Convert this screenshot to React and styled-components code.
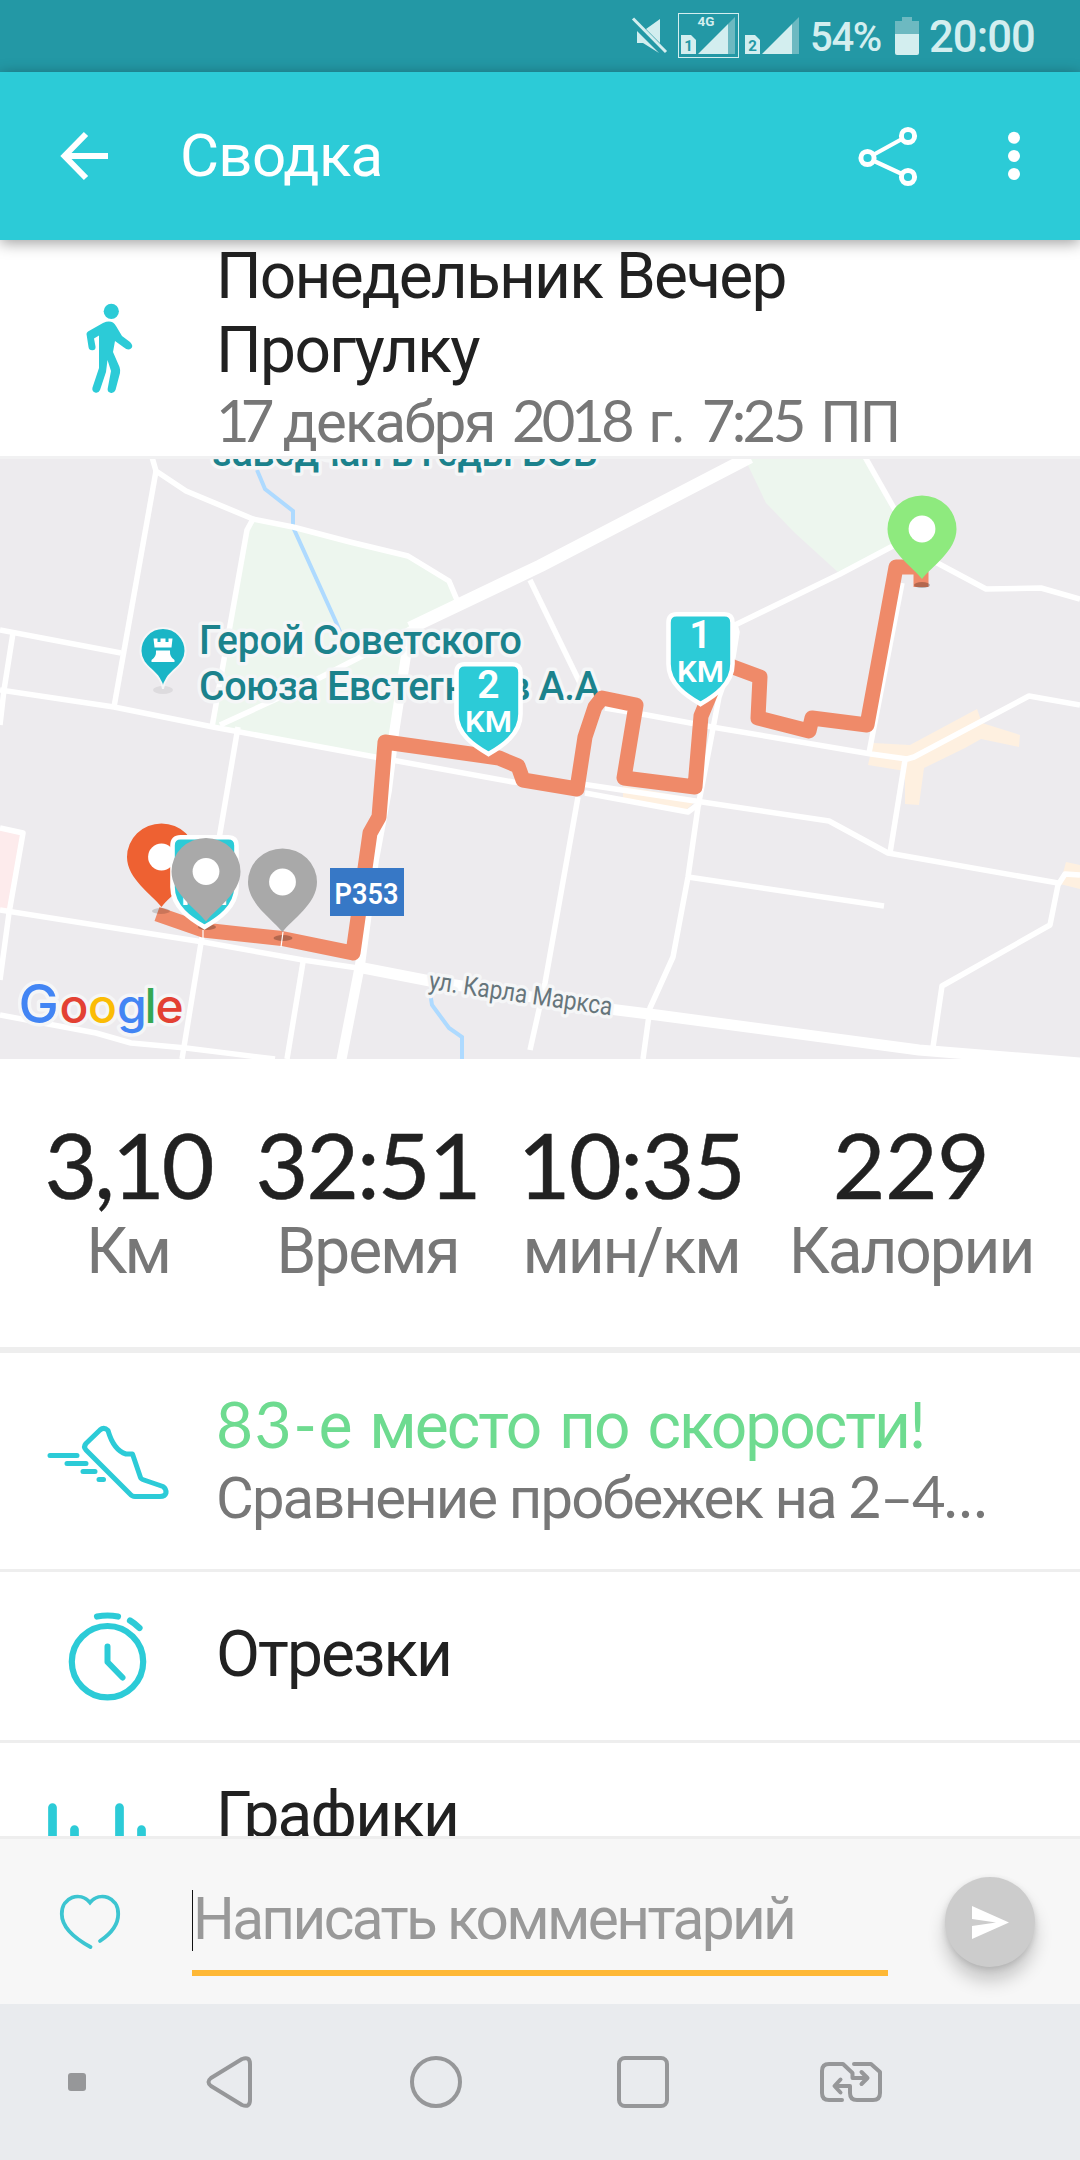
import React from 'react';
import styled, { createGlobalStyle } from 'styled-components';

const GlobalStyle = createGlobalStyle`
  * { box-sizing: border-box; }
  body {
    margin: 0;
    background: #fff;
    font-family: Roboto, "Liberation Sans", sans-serif;
  }
  svg { display: block; flex: none; overflow: visible; }
`;

const teal = '#2ccbd7';

const Screen = styled.div`
  width: 1080px;
  height: 2160px;
  display: flex;
  flex-direction: column;
  overflow: hidden;
  background: #fff;
`;

/* status bar */
const StatusBar = styled.div`
  flex: none;
  height: 72px;
  padding: 0 45px 0 632px;
  display: flex;
  background: #2398a5;
  color: #d3eeef;
`;

const StatusText = styled.span`
  width: ${p => p.$width}px;
  margin-left: ${p => p.$left}px;
  font-size: ${p => p.$size}px;
  font-weight: 500;
  letter-spacing: ${p => p.$spacing || 0}px;
  line-height: 75px;
  white-space: nowrap;
`;

/* app bar */
const AppBar = styled.header`
  position: relative;
  z-index: 2;
  flex: none;
  height: 168px;
  padding: 0 60px;
  display: flex;
  align-items: center;
  background: ${teal};
  box-shadow: 0 3px 14px rgba(0, 0, 0, 0.38);
`;

const AppTitle = styled.h1`
  flex: 1;
  margin: 0 0 0 72px;
  color: #fff;
  font-size: 60px;
  font-weight: 400;
  line-height: 168px;
  letter-spacing: -0.7px;
`;

const Content = styled.main`
  flex: none;
  height: 1596px;
  display: flex;
  flex-direction: column;
  overflow: hidden;
`;

/* rows */
const Row = styled.section`
  flex: none;
  height: ${p => p.$height}px;
  padding-top: ${p => p.$top}px;
  display: flex;
  align-items: flex-start;
  border-bottom: ${p => (p.$border || 0)}px solid #eee;
`;

const IconCell = styled.div`
  flex: none;
  width: 216px;
  padding-top: ${p => p.$top || 0}px;
  display: flex;
  justify-content: center;
`;

const RowText = styled.div`
  flex: 1;
  padding-top: ${p => p.$top || 0}px;
`;

const Title = styled.div`
  font-size: 64px;
  line-height: 74px;
  letter-spacing: ${p => p.$spacing || -1.8}px;
  word-spacing: ${p => p.$words || 0}px;
  color: ${p => p.$color || '#212121'};
  white-space: nowrap;
`;

const SubTitle = styled.div`
  font-size: 58px;
  line-height: 68px;
  letter-spacing: -1.85px;
  word-spacing: ${p => p.$words || 0}px;
  color: #777;
  white-space: nowrap;
`;

const Num = styled.span`
  font-family: Lato, Roboto, sans-serif;
  line-height: 0;
  letter-spacing: ${p => (p.$spacing === undefined ? 'inherit' : `${p.$spacing}px`)};
`;

const MapBox = styled.div`
  flex: none;
  height: 603px;
  border-top: 3px solid #f1f1f2;
  background: #edebee;
  overflow: hidden;
`;

/* stats */
const Stats = styled.section`
  flex: none;
  height: 294px;
  padding-top: 55px;
  display: grid;
  grid-template-columns: 256px 223px 304px 256px;
  border-bottom: 6px solid #eee;
`;

const Stat = styled.div`
  display: flex;
  flex-direction: column;
  align-items: center;
  white-space: nowrap;
`;

const StatValue = styled.div`
  font-family: Lato, Roboto, sans-serif;
  font-size: 91px;
  line-height: 100px;
  letter-spacing: ${p => p.$spacing || 0}px;
  color: #212121;
  -webkit-text-stroke: 0.5px #212121;
`;

const StatLabel = styled.div`
  font-size: 64px;
  line-height: 76px;
  letter-spacing: -2.1px;
  color: #777;
`;

/* comment bar */
const CommentBar = styled.footer`
  flex: none;
  height: 168px;
  display: flex;
  align-items: flex-start;
  border-top: 3px solid #eee;
  background: #f7f7f7;
`;

const HeartCell = styled.div`
  width: 192px;
  padding: 54px 0 0 58px;
`;

const Field = styled.div`
  width: 696px;
  height: 137px;
  padding-top: 51px;
  display: flex;
  border-bottom: 6px solid #feb836;
`;

const Caret = styled.span`
  width: 1px;
  height: 61px;
  background: #111;
`;

const Placeholder = styled.span`
  font-size: 58.5px;
  line-height: 59px;
  color: #999;
  letter-spacing: -2.6px;
  white-space: nowrap;
`;

const SendButton = styled.div`
  width: 90px;
  height: 90px;
  margin: 38px 0 0 57px;
  display: flex;
  align-items: center;
  justify-content: center;
  border-radius: 50%;
  background: #ccc;
  box-shadow: 0 14px 18px rgba(0, 0, 0, 0.2), 0 2px 6px rgba(0, 0, 0, 0.12);
`;

/* android nav */
const NavBar = styled.nav`
  flex: none;
  height: 156px;
  display: grid;
  grid-template-columns: 154px 150px 264px 150px 266px;
  justify-items: center;
  align-items: center;
  background: #e9ebee;
`;

const MuteIcon = () => (
  <svg width="36" height="72" viewBox="0 0 36 72">
    <path d="M28 19V43L14 29ZM5 31L27 53L11 43H5Z" fill="currentColor" />
    <path d="M1 18.5L34 52" stroke="currentColor" strokeWidth="3" />
  </svg>
);

const SignalCell = styled.svg`
  margin-left: ${p => p.$left}px;
`;

const SignalIcon = ({ sim, boxed }) => (
  <SignalCell $left={boxed ? 10 : 2} width="62" height="72" viewBox="0 0 62 72">
    {boxed && <rect x=".5" y="13.5" width="60" height="44" fill="none" stroke="currentColor" />}
    {boxed && <text x="28" y="26" textAnchor="middle" fontSize="13.5" fontWeight="700" fill="currentColor">4G</text>}
    <path d="M3 35H13L18 40V54H3Z" fill="currentColor" />
    <text x="10.5" y="51" textAnchor="middle" fontSize="15" fontWeight="700" fill="#2398a5">{sim}</text>
    <path d="M20 54L50 24V54Z" fill="currentColor" />
    <path d="M50 24L57 17V54H50Z" fill="#6db9c1" />
  </SignalCell>
);

const BatteryIcon = () => (
  <svg width="24" height="72" viewBox="0 0 24 72">
    <path d="M7 17H17V21H24V34H0V21H7Z" fill="#6db9c1" />
    <path d="M0 34H24V53Q24 55 22 55H2Q0 55 0 53Z" fill="currentColor" />
  </svg>
);

const BackIcon = () => (
  <svg width="48" height="48" viewBox="0 0 48 48" fill="none" stroke="#fff" strokeWidth="6">
    <path d="M48 24H5M26 2L4.5 24L26 46" />
  </svg>
);

const ShareIcon = () => (
  <svg width="60" height="62" viewBox="0 0 60 62" fill="none" stroke="#fff" strokeWidth="5">
    <circle cx="50" cy="11" r="6.6" />
    <circle cx="9.5" cy="33" r="6.6" />
    <circle cx="50" cy="52" r="6.6" />
    <path d="M15 30L44 14M16 36L44 49" strokeWidth="4.2" />
  </svg>
);

const DotsMark = styled.svg`
  margin-left: 90px;
`;

const WalkIcon = () => (
  <svg width="48" height="92" viewBox="84 302 48 92" fill={teal}>
    <ellipse cx="111.3" cy="311.3" rx="7.6" ry="7.6" />
    <path d="M103 323Q112 319 116 326L122 336L130 342Q134 346 131 348.5Q128 351 124 347.5L115 341L113 352L119.5 367Q120.5 370 120 373L115.5 390Q114 393.5 111 393Q107 392 107.7 388.5L111 371L107.5 360L106 372L100 390Q98.5 393.5 95 392.5Q91.5 391 92.5 387.5L99 368V335.5L94 338.5L95.5 346.5Q96 350 92.5 350.3Q89 350.5 88.5 347L86.5 334Q86.5 332.5 88 331.5Z" />
  </svg>
);

const ShoeIcon = () => (
  <svg width="120" height="76" viewBox="0 0 120 76" fill="none" stroke={teal} strokeWidth="5" strokeLinecap="round" strokeLinejoin="round">
    <path d="M52 5Q56 1.5 60 5.5C63 16 68 26 78 29H84.5L92.5 52.5Q93 54 96 55L115 61.5Q118.5 64 118 68Q117 71.5 112 71.5H87Q84 71.5 82 69L38 25Q35 22 38 18.5Z" />
    <path d="M2 30.5H29M19 38.5H38M35 46.5H47M51 54.5H55.5" />
  </svg>
);

const ClockIcon = () => (
  <svg width="80" height="92" viewBox="0 0 80 92" fill="none" stroke={teal} strokeLinecap="round" strokeLinejoin="round">
    <circle cx="39.5" cy="51.7" r="35.7" strokeWidth="6.2" />
    <path d="M39.5 36.5V52L54.5 67.5" strokeWidth="6" />
    <path d="M29 6.5Q39.5 4.5 50 6.5M62 10.5Q67 13.5 71.5 18" strokeWidth="6.2" />
  </svg>
);

const ChartIcon = () => (
  <svg width="120" height="90" viewBox="0 0 120 90" stroke={teal} strokeWidth="8.7" strokeLinecap="round">
    <path d="M4.5 4.5V80M26.5 26.5V80M71.5 4.5V80M93.5 26.5V80" />
  </svg>
);

const HeartIcon = () => (
  <svg width="64" height="58" viewBox="58 1893 64 58" fill="none" stroke="#3cc5d1" strokeWidth="3.8" strokeLinecap="round">
    <path d="M90.5 1947C74 1938 61.8 1927 61.8 1914C61.8 1897 80 1891 90 1902.5C100 1891 118.2 1897 118.2 1914C118.2 1926 109 1935 100 1941" />
  </svg>
);

const SendIcon = () => (
  <svg width="37" height="33" viewBox="0 0 37 33">
    <path d="M0 0L37 16.5L0 33V20L24 16.5L0 13Z" fill="#fff" />
  </svg>
);

const parks = [
  'M253 519L293 527L408 556L449 581L457 600L410 630L394 733L385 758L213 727L247 530Z',
  'M744 457L766 503L795 533L840 574L893 547V513L865 457Z',
];

const blocks = [
  'M873 743L910 745L977 709L982 723L1020 735L1019 747L981 739L965 748L924 768L919 805L905 804V771L868 765Z',
  'M623 786L698 799L686 810L623 798Z',
  'M1066 862L1080 865V889L1060 884Z',
];

const streets = [
  'M152 457L156 471L186 491L253 519L293 527L350 542L408 556L449 581L457 600',
  'M156 471L114 707',
  'M253 519L247 530L212 727',
  'M0 630L121 653',
  'M13 633L4 690L0 725',
  'M0 690L114 707L213 727L375 757L513 782L585 784.5L702 802L829 821L888 853L1058 883',
  'M585 793L688 812L700 803',
  'M220 725L296 690L368 653L412 628',
  'M238 727L220 833L201 943L182 1059',
  'M530 580L581 685',
  'M865 457L895 510',
  'M915 535L891 547L840 574L735 625L737 632L733 657L719 697L698 807L688 877L673 957L650 1008L643 1059',
  'M930 559L941 565L986 589L1041 588L1080 599',
  'M902 583L874 727L869 753',
  'M605 708L647 715L712 727L871 754L907 759L914 757L1029 696L1080 705',
  'M905 760L890 853',
  'M688 877L884 906',
  'M1080 875L1065 874L1058 885L1050 925L942 986L933 1047',
  'M0 910L203 942L303 960L358 968',
  'M303 962L287 1059',
  'M0 1015L96 1033L131 1043L186 1048L275 1059',
  'M0 828L23 833L9 913L0 980',
  'M578 797L545 983L530 1050',
];

const route = 'M921 587V567H896L867 725L812 718L809 731L758 718L760 677L733 667L718 661L711 692L701 716L695 787L624 778L636 705L602 698L595 707L585 737L577 789L523 780L518 766L499 758L385 742L379 817L370 833L353 953L282 938.5L203 930L157 914';

const Pin = ({ x, y, color }) => (
  <g transform={`translate(${x} ${y})`}>
    <path d="M0 50C-9 38 -34.5 22 -34.5 0A34.5 33.5 0 0 1 34.5 0C34.5 22 9 38 0 50Z" fill={color} />
    <circle r="13.4" fill="#fff" />
  </g>
);

const KmMarker = ({ x, y, n }) => (
  <g transform={`translate(${x} ${y})`}>
    <path d="M-24 2.3H24Q32 2.3 32 10.5V52C32 72 14 84 0 92C-14 84 -32 72 -32 52V10.5Q-32 2.3 -24 2.3Z" fill={teal} stroke="#fff" strokeWidth="4.6" />
    <text y="36" textAnchor="middle" fontSize="39" fontWeight="600" fill="#fff">{n}</text>
    <text x="-23.5" y="70" textLength="47" lengthAdjust="spacingAndGlyphs" fontSize="29.5" fontWeight="600" fill="#fff">KM</text>
  </g>
);

const Halo = styled.text`
  font-family: Roboto, sans-serif;
  paint-order: stroke;
  stroke: #f5f6f7;
  stroke-width: 7px;
  stroke-linejoin: round;
`;

const MapLogo = styled(Halo)`
  font-family: Inter, Roboto, sans-serif;
  font-weight: 500;
  font-size: 48px;
`;

const RouteMap = () => (
  <svg width="1080" height="600" viewBox="0 459 1080 600">
    {parks.map(d => <path key={d} d={d} fill="#edf6ee" />)}
    {blocks.map(d => <path key={d} d={d} fill="#fef0e0" />)}
    <path d="M0 828L22 832L9 911L0 909Z" fill="#fdebec" />

    {/* streams */}
    <g fill="none" stroke="#aedaff" strokeWidth="4">
      <path d="M257 470L265 489L293 511V527L336 622L341 634" />
      <path d="M430 992L432 1005L449 1028L462 1037V1059" />
    </g>

    {/* streets */}
    <g fill="none" stroke="#fff" strokeWidth="5.5" strokeLinejoin="round">
      {streets.map(d => <path key={d} d={d} />)}
      <path d="M410 628L540 566L750 457" strokeWidth="13" />
      <path d="M410 630L394 733L387 790L374 860L360 965L341 1062" strokeWidth="10" />
      <path d="M358 967L430 981L609 1009L657 1015L919 1050L1080 1063" strokeWidth="11" />
    </g>

    <Halo x="212" y="466" textLength="386" fontSize="40" fontWeight="500" fill="#1b828c">заводчан в годы ВОВ</Halo>
    <Halo x="199" y="654" textLength="323" fontSize="40" fontWeight="500" fill="#1b828c">Герой Советского</Halo>
    <Halo x="199" y="700" textLength="402" fontSize="40" fontWeight="500" fill="#1b828c">Союза Евстегнеев А.А</Halo>
    <Halo transform="translate(428 989) rotate(8.2)" textLength="185" lengthAdjust="spacingAndGlyphs" fontSize="26" fill="#66757b">ул. Карла Маркса</Halo>

    {/* monument */}
    <ellipse cx="163" cy="690" rx="10" ry="4" fill="#dddbde" />
    <path d="M163 689C161 671 140.5 668 140.5 651A22.5 23 0 0 1 185.5 651C185.5 668 165 671 163 689Z" fill="#1ab5c6" stroke="#f5f6f7" strokeWidth="2" />
    <path d="M153.5 638.5H157.5V642H160.5V638.5H165.5V642H168.5V638.5H172.5L171.5 647.5H154.5ZM156 650.5H170Q169.5 657 174.5 660V662H151.5V660Q156.5 657 156 650.5Z" fill="#fff" />

    <path d={route} fill="none" stroke="#ef8a69" strokeWidth="15" strokeLinejoin="round" />
    <g fill="#000" fillOpacity=".25">
      <ellipse cx="922" cy="585" rx="8" ry="3" />
      <ellipse cx="207" cy="927" rx="9" ry="3" />
      <ellipse cx="283" cy="938" rx="9.5" ry="3" />
    </g>
    <ellipse cx="161" cy="911" rx="9" ry="3" fillOpacity=".15" />
    <path d="M203 930V939M283 932L281 947" stroke="#fff" strokeWidth="1.2" />

    <rect x="330" y="868" width="74" height="48" fill="#3778c6" />
    <text x="334.5" y="904" textLength="64" lengthAdjust="spacingAndGlyphs" fontSize="29" fontWeight="600" fill="#fff">Р353</text>

    <Pin x="922" y="529" color="#8eea7e" />
    <KmMarker x="700.5" y="612" n="1" />
    <KmMarker x="488.5" y="662" n="2" />
    <Pin x="161.5" y="857" color="#ee6132" />
    <KmMarker x="204.5" y="835" n="3" />
    <Pin x="206" y="871.5" color="#a9a9a9" />
    <Pin x="282.5" y="882" color="#a9a9a9" />

    <MapLogo y="1023">
      <tspan x="18.5" fontSize="54" fill="#4285f4">G</tspan>
      <tspan x="59.5" fill="#e34133">o</tspan>
      <tspan x="88" fill="#fbbc05">o</tspan>
      <tspan x="117" fill="#4285f4">g</tspan>
      <tspan x="144.5" fill="#34a853">l</tspan>
      <tspan x="155.5" fill="#e34133">e</tspan>
    </MapLogo>
  </svg>
);

const stats = [
  { value: '3,10', label: 'Км', spacing: -3 },
  { value: '32:51', label: 'Время', spacing: -2 },
  { value: '10:35', label: 'мин/км', spacing: -1.5 },
  { value: '229', label: 'Калории', spacing: -0.6 },
];

const App = () => {
  return (
    <Screen>
      <GlobalStyle />
      <StatusBar>
        <MuteIcon />
        <SignalIcon sim="1" boxed />
        <SignalIcon sim="2" />
        <StatusText $left={6} $width={85} $size={40} $spacing={-1.3}>54%</StatusText>
        <BatteryIcon />
        <StatusText $left={10} $width={106} $size={43.5} $spacing={-0.9}>20:00</StatusText>
      </StatusBar>

      <AppBar>
        <BackIcon />
        <AppTitle>Сводка</AppTitle>
        <ShareIcon />
        <DotsMark width="12" height="50" viewBox="0 0 12 50" fill="#fff">
          <circle cx="6" cy="6.7" r="6" />
          <circle cx="6" cy="25" r="6" />
          <circle cx="6" cy="43" r="6" />
        </DotsMark>
      </AppBar>

      <Content>
        <Row $height={216} $top={0}>
          <IconCell $top={62}><WalkIcon /></IconCell>
          <RowText>
            <Title>Понедельник Вечер</Title>
            <Title $spacing={-1.6}>Прогулку</Title>
            <SubTitle $words={5}>
              <Num $spacing={-9}>17</Num> декабря <Num $spacing={-4}>2018</Num> г. <Num $spacing={-3.6}>7:25</Num> ПП
            </SubTitle>
          </RowText>
        </Row>

        <MapBox><RouteMap /></MapBox>

        <Stats>
          {stats.map(s => (
            <Stat key={s.label}>
              <StatValue $spacing={s.spacing}>{s.value}</StatValue>
              <StatLabel>{s.label}</StatLabel>
            </Stat>
          ))}
        </Stats>

        <Row $height={219} $top={36} $border={3}>
          <IconCell $top={36}><ShoeIcon /></IconCell>
          <RowText $top={1}>
            <Title $color="#6edb90" $spacing={-2} $words={5}><Num $spacing={1.5}>83-</Num>е место по скорости<Num>!</Num></Title>
            <SubTitle>Сравнение пробежек на <Num>2–4…</Num></SubTitle>
          </RowText>
        </Row>
        <Row $height={171} $top={38} $border={3}>
          <IconCell><ClockIcon /></IconCell>
          <RowText $top={8}><Title $spacing={-1.95}>Отрезки</Title></RowText>
        </Row>
        <Row $height={148} $top={36}>
          <IconCell $top={24}><ChartIcon /></IconCell>
          <RowText><Title>Графики</Title></RowText>
        </Row>
      </Content>

      <CommentBar>
        <HeartCell><HeartIcon /></HeartCell>
        <Field>
          <Caret />
          <Placeholder>Написать комментарий</Placeholder>
        </Field>
        <SendButton><SendIcon /></SendButton>
      </CommentBar>

      <NavBar>
        <svg width="18" height="18"><rect width="18" height="18" rx="3" fill="#969799" /></svg>
        <svg width="46" height="52" viewBox="0 0 46 52" fill="none" stroke="#969799" strokeWidth="4">
          <path d="M36 3Q44 0 44 8V44Q44 52 36 49L5 30Q0 26 5 22Z" strokeLinejoin="round" />
        </svg>
        <svg width="52" height="52" fill="none" stroke="#969799" strokeWidth="4">
          <circle cx="26" cy="26" r="24" />
        </svg>
        <svg width="52" height="52" fill="none" stroke="#969799" strokeWidth="4">
          <rect x="2" y="2" width="48" height="48" rx="6" />
        </svg>
        <svg width="62" height="40" viewBox="820 2062 62 40" fill="none" stroke="#969799" strokeWidth="4" strokeLinecap="round" strokeLinejoin="round">
          <path d="M842 2100H829Q822 2100 822 2093V2071Q822 2064 829 2064H843L852.5 2073V2078H867M861.5 2072L867.5 2078L861.5 2084" />
          <path d="M854 2064H871L880 2072V2093Q880 2100 873 2100H857Q850 2100 850 2093V2086H835M840.5 2079.5L834.5 2086L840.5 2092.5" />
        </svg>
      </NavBar>
    </Screen>
  );
};

export default App;
